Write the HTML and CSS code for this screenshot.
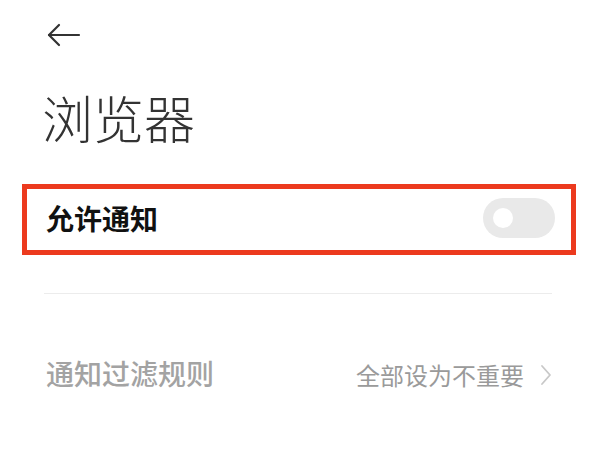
FILE: index.html
```html
<!DOCTYPE html>
<html lang="zh">
<head>
<meta charset="utf-8">
<link rel="stylesheet" href="styles.css">
</head>
<body>
<div class="page">
  <div class="topbar">
    <svg class="back" width="34" height="24" viewBox="0 0 34 24" fill="none" stroke="#333" stroke-width="2.2" stroke-linecap="round" stroke-linejoin="round">
      <path d="M2 12 H32"/>
      <path d="M12 2 L2 12 L12 22"/>
    </svg>
  </div>
  <h1 class="title">浏览器</h1>
  <div class="highlight">
    <div class="row">
      <span class="label">允许通知</span>
      <span class="switch"><span class="knob"></span></span>
    </div>
  </div>
  <div class="divider"></div>
  <div class="row filter">
    <span class="label muted">通知过滤规则</span>
    <span class="value">全部设为不重要
      <svg class="chev" width="12" height="22" viewBox="0 0 12 22" fill="none" stroke="#c8c8c8" stroke-width="1.8" stroke-linecap="round" stroke-linejoin="round"><path d="M2 2 L10 11 L2 20"/></svg>
    </span>
  </div>
</div>
</body>
</html>
```

FILE: styles.css
```css
html, body {
  margin: 0;
  padding: 0;
  background: #ffffff;
}
.page {
  width: 600px;
  height: 450px;
  overflow: hidden;
  font-family: "Noto Sans CJK SC", "Noto Sans", sans-serif;
}
.topbar {
  padding: 23px 0 0 47px;
  height: 24px;
}
.back {
  display: block;
}
.title {
  margin: 45px 0 0 42px;
  font-size: 51px;
  line-height: 50px;
  font-weight: 300;
  color: #333333;
  letter-spacing: 0;
}
.highlight {
  margin: 42px 24px 0 22px;
  border: 5px solid #ec3a1e;
}
.row {
  display: flex;
  align-items: center;
  justify-content: space-between;
}
.highlight .row {
  height: 61px;
  padding: 0 16px 0 19px;
}
.label {
  font-size: 28px;
  font-weight: 700;
  color: #111111;
  position: relative;
  top: -2px;
}
.switch {
  width: 72px;
  height: 40px;
  border-radius: 20px;
  background: #e9e9e9;
  display: flex;
  align-items: center;
  padding-left: 10px;
  box-sizing: border-box;
  position: relative;
  top: -2px;
}
.knob {
  width: 20px;
  height: 20px;
  border-radius: 50%;
  background: #ffffff;
}
.divider {
  margin: 38px 48px 0 44px;
  height: 1px;
  background: #ececec;
}
.filter {
  height: 160px;
  padding: 0 48px 0 46px;
  align-items: flex-start;
  padding-top: 59px;
  box-sizing: border-box;
}
.muted {
  color: #a3a3a3;
  font-weight: 500;
  top: 0;
}
.value {
  display: flex;
  align-items: center;
  gap: 16px;
  font-size: 24px;
  color: #9a9a9a;
  padding-top: 4px;
}
.chev {
  display: block;
}
```
